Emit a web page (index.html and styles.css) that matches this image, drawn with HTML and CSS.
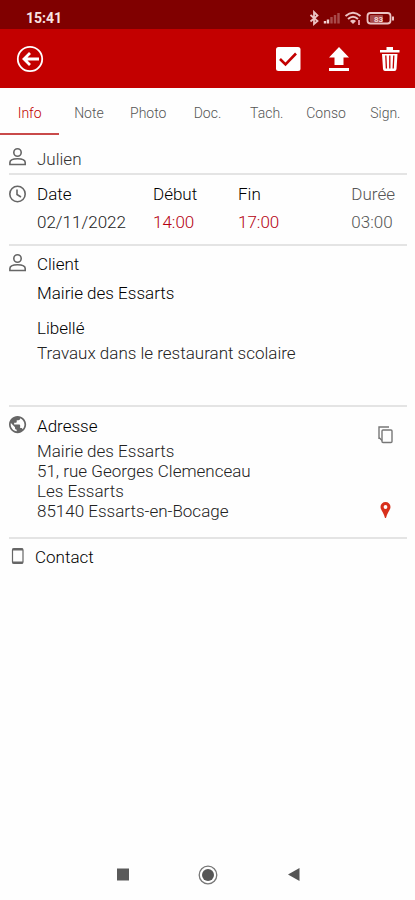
FILE: index.html
```html
<!DOCTYPE html>
<html lang="fr">
<head>
<meta charset="utf-8">
<meta name="viewport" content="width=device-width, initial-scale=1">
<title>Intervention</title>
<link rel="stylesheet" href="styles.css">
</head>
<body>
<div class="status">
  <span class="clock">15:41</span>
  <svg class="status-icons" width="88" height="16" viewBox="0 0 88 16" fill="none" stroke="#ecc4c4" aria-hidden="true">
    <path d="M2.500 5l7 6L6 14V2l3.500 3.500-7 6" stroke-width="1.800"/>
    <path d="M17 13.500V11M20 13.500v-4" stroke="#f0d0d0" stroke-width="2.400"/>
    <path d="M23.500 13.500V7M27 13.500V5M30.500 13.500V3" stroke="#a84a4a" stroke-width="2.400"/>
    <path d="M37.500 6q7.500-6.500 15 0M40 9q5-4.500 10 0" stroke-width="2"/>
    <path d="M42 11q3-2.500 6 0l-3 3z" fill="#ecc4c4" stroke="none"/>
    <path d="M51 10v5" stroke="#e58a9c" stroke-width="2"/>
    <rect x="59.500" y="3" width="23" height="10.500" rx="3" stroke-width="1.800"/>
    <path d="M85 6.500v4" stroke-width="2"/>
    <rect x="62" y="5" width="13" height="7" rx="1" fill="#a84a4a" stroke="none"/>
    <text x="66" y="11.500" class="battery">83</text>
  </svg>
</div>
<header class="appbar">
  <button class="icon-btn" aria-label="Retour">
    <svg width="28" height="28" viewBox="0 0 28 28" fill="none" stroke="#fff"><circle cx="14" cy="14" r="12.200" stroke-width="1.800"/><path d="M23 14H8M14 8l-6 6 6 6" stroke-width="2.800"/></svg>
  </button>
  <div class="actions">
    <button class="icon-btn" aria-label="Valider">
      <svg width="26" height="26" viewBox="0 0 26 26"><rect x="1" y="1" width="24.500" height="24" rx="2.500" fill="#fff"/><path d="M5 13l5.500 5.500L21 7.500" fill="none" stroke="#c30000" stroke-width="2.600"/></svg>
    </button>
    <button class="icon-btn" aria-label="Envoyer">
      <svg width="26" height="26" viewBox="0 0 26 26" fill="#fff"><path d="M13 1l10 10.500h-5.500V19h-9v-7.500H3zM3 22h20v3H3z"/></svg>
    </button>
    <button class="icon-btn" aria-label="Supprimer">
      <svg width="26" height="26" viewBox="0 0 26 26"><path d="M9.500 4V1h6.500v3H22.500v2.500H3V4zM5 8h15.500l-1 15q-.2 2-2 2H8q-1.800 0-2-2z" fill="#fff"/><path d="M8.800 9.500l.6 13M12.800 9.500v13M16.800 9.500l-.6 13" stroke="#c30000" stroke-width="1.300"/></svg>
    </button>
  </div>
</header>
<nav class="tabs">
  <a href="#info" class="tab active" aria-current="page">Info</a>
  <a href="#note" class="tab">Note</a>
  <a href="#photo" class="tab">Photo</a>
  <a href="#doc" class="tab">Doc.</a>
  <a href="#tach" class="tab">Tach.</a>
  <a href="#conso" class="tab">Conso</a>
  <a href="#sign" class="tab">Sign.</a>
</nav>
<main class="content" id="info">
  <section class="row user">
    <svg class="lead" width="18" height="20" viewBox="0 0 18 20" fill="none" stroke="#666" stroke-width="1.600"><circle cx="8.500" cy="5.500" r="3.700"/><path d="M.9 17.500v-2c0-5 15.300-5 15.300 0v2z"/></svg>
    <p class="muted">Julien</p>
  </section>
  <section class="row time">
    <svg class="lead" width="18" height="20" viewBox="0 0 18 20" fill="none" stroke="#666" stroke-width="1.600"><circle cx="8.500" cy="10" r="7.700"/><path d="M8 5.500v5l4 2.500"/></svg>
    <dl class="times">
      <div><dt>Date</dt><dd>02/11/2022</dd></div>
      <div><dt>Début</dt><dd class="red">14:00</dd></div>
      <div><dt>Fin</dt><dd class="red">17:00</dd></div>
      <div class="duration"><dt>Durée</dt><dd>03:00</dd></div>
    </dl>
  </section>
  <section class="row client">
    <svg class="lead" width="18" height="20" viewBox="0 0 18 20" fill="none" stroke="#666" stroke-width="1.600"><circle cx="8.500" cy="5.500" r="3.700"/><path d="M.9 17.500v-2c0-5 15.300-5 15.300 0v2z"/></svg>
    <div>
      <h2>Client</h2>
      <p class="name">Mairie des Essarts</p>
      <h2>Libellé</h2>
      <p class="label">Travaux dans le restaurant scolaire</p>
    </div>
  </section>
  <section class="row address">
    <svg class="lead" width="18" height="20" viewBox="2 1 21 23"><path d="M12 2C6.480 2 2 6.480 2 12s4.480 10 10 10 10-4.480 10-10S17.520 2 12 2zm-1 17.930c-3.950-.49-7-3.850-7-7.930 0-.62.080-1.210.21-1.790L9 15v1c0 1.100.9 2 2 2v1.930zm6.900-2.540c-.26-.81-1-1.390-1.900-1.390h-1v-3c0-.55-.45-1-1-1H8v-2h2c.55 0 1-.45 1-1V7h2c1.100 0 2-.9 2-2v-.41c2.930 1.190 5 4.060 5 7.410 0 2.080-.8 3.970-2.100 5.390z" fill="#666"/></svg>
    <div class="grow">
      <h2>Adresse</h2>
      <address>Mairie des Essarts<br>51, rue Georges Clemenceau<br>Les Essarts<br>85140 Essarts-en-Bocage</address>
    </div>
    <div class="side">
      <button class="icon-btn" aria-label="Copier l’adresse">
        <svg width="18" height="20" viewBox="0 0 18 20" fill="none" stroke="#777" stroke-width="1.400"><path d="M2 14V2H12M2 12.500l3 3"/><rect x="5" y="5" width="10" height="12.500" rx="1"/></svg>
      </button>
      <button class="icon-btn" aria-label="Voir sur la carte">
        <svg width="18" height="20" viewBox="0 0 18 20"><path d="M8.500 1a5 5 0 0 1 5 5c0 3-3.500 6-4.500 11H8C7 12 3.500 9 3.500 6a5 5 0 0 1 5-5z" fill="#d8301c"/><circle cx="8.500" cy="6" r="1.900" fill="#fff"/></svg>
      </button>
    </div>
  </section>
  <section class="row contact">
    <svg class="lead" width="18" height="20" viewBox="0 0 18 20" fill="none" stroke="#666"><rect x="3.500" y="2.500" width="10.500" height="15" rx="1.500" stroke-width="1.200"/><path d="M3.500 3.500H14M3.500 16.500H14" stroke-width="2"/></svg>
    <h2>Contact</h2>
  </section>
</main>
<footer class="navbar">
  <button class="icon-btn" aria-label="Applications récentes"><svg width="20" height="20" viewBox="0 0 20 20"><path d="M5 3.500h12v12H5z" fill="#5a5a5a"/></svg></button>
  <button class="icon-btn" aria-label="Accueil"><svg width="20" height="20" viewBox="0 0 20 20"><circle cx="10" cy="10" r="8.800" fill="none" stroke="#777" stroke-width="1.300"/><circle cx="10" cy="10" r="6" fill="#555"/></svg></button>
  <button class="icon-btn" aria-label="Précédent"><svg width="20" height="20" viewBox="0 0 20 20"><path d="M15.500 3v13L4 9.500z" fill="#555"/></svg></button>
</footer>
</body>
</html>
```
FILE: styles.css
```css
* { box-sizing: border-box; }
body {
  margin: 0;
  min-height: 100vh;
  display: flex;
  flex-direction: column;
  background: #fefefe;
  color: #222;
  font: 300 17px/20px Roboto, sans-serif;
}
h2, p, dl, dd { margin: 0; }
h2, dt { font-size: 17px; font-weight: 300; }
h2, dt, .name { color: #000; }
svg { display: block; flex: none; }
.icon-btn { padding: 0; border: 0; background: none; }
.status {
  display: flex;
  justify-content: space-between;
  align-items: center;
  padding: 10px 19px 3px 26px;
  background: #800000;
}
.clock { color: #f8e4e4; font-size: 14px; line-height: 16px; font-weight: 700; }
.battery { font: 700 8px Roboto, sans-serif; fill: #f3d6d6; stroke: none; }
.appbar {
  display: flex;
  justify-content: space-between;
  align-items: center;
  padding: 16px 12px 15px 16px;
  background: #c30000;
}
.actions { display: flex; gap: 25px; }
.tabs { display: grid; grid-template-columns: repeat(7, 1fr); }
.tab {
  padding: 15px 0 10px;
  border-bottom: 2px solid transparent;
  color: #555;
  font-size: 14px;
  text-align: center;
  text-decoration: none;
}
.tab.active { color: #c00000; border-color: #c94a4a; }
.content { flex: 1; padding: 0 8px 0 9px; }
.row { display: flex; gap: 10px; border-bottom: 2px solid #e4e4e4; }
.row.contact { border: 0; }
.muted { color: #333; }
.user { padding: 12px 0 4px; }
.user p { padding-top: 2px; }
.time { padding: 9px 0 12px; }
.times { flex: 1; display: grid; grid-template-columns: 116px 85px 1fr auto; }
.times dd { padding-top: 8px; }
.times .red { color: #b50010; }
.duration, .duration dt { color: #555; }
.duration { padding-right: 12px; }
.client { padding: 7px 0 42px; }
.client h2, .address h2 { padding-top: 1px; }
.name { padding: 9px 0 14px; }
.label { padding-top: 5px; }
.address { padding: 8px 0 16px; }
.grow { flex: 1; }
address { padding-top: 5px; font-style: normal; }
.side { display: flex; flex-direction: column; justify-content: space-between; padding: 10px 12px 0 0; }
.contact { padding-top: 7px; gap: 8px; }
.contact h2 { padding-top: 1px; }
.navbar { display: flex; justify-content: center; gap: 66px; padding: 15px 0; }
```
